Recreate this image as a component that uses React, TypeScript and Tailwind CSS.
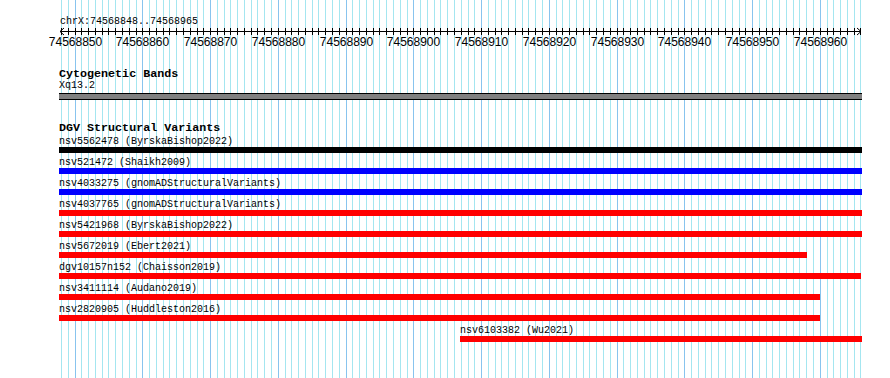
import React from 'react';

// Browser image: grid lines every base, ruler, cytoband and DGV tracks
const GRID_X0 = 61;
const BASE_PX = 6.775;
const FIRST_BASE = 74568848;
const LINE_COUNT = 119;

const gridLines = Array.from({ length: LINE_COUNT }, (_, k) => ({
  x: Math.round(GRID_X0 + k * BASE_PX) + 0.5,
  major: (FIRST_BASE + k) % 10 === 0,
  base: FIRST_BASE + k,
}));

interface Variant {
  name: string;
  study: string;
  color: string;
  left: number; // px from track start
  width: number;
}

const variants: Variant[] = [
  { name: 'nsv5562478', study: 'ByrskaBishop2022', color: '#000000', left: 0, width: 803 },
  { name: 'nsv521472', study: 'Shaikh2009', color: '#0000ff', left: 0, width: 803 },
  { name: 'nsv4033275', study: 'gnomADStructuralVariants', color: '#0000ff', left: 0, width: 803 },
  { name: 'nsv4037765', study: 'gnomADStructuralVariants', color: '#ff0000', left: 0, width: 803 },
  { name: 'nsv5421968', study: 'ByrskaBishop2022', color: '#ff0000', left: 0, width: 803 },
  { name: 'nsv5672019', study: 'Ebert2021', color: '#ff0000', left: 0, width: 748 },
  { name: 'dgv10157n152', study: 'Chaisson2019', color: '#ff0000', left: 0, width: 802 },
  { name: 'nsv3411114', study: 'Audano2019', color: '#ff0000', left: 0, width: 761 },
  { name: 'nsv2820905', study: 'Huddleston2016', color: '#ff0000', left: 0, width: 761 },
  { name: 'nsv6103382', study: 'Wu2021', color: '#ff0000', left: 401, width: 402 },
];

const Grid = () => (
  <svg className="absolute inset-0 pointer-events-none" width={890} height={378} shapeRendering="crispEdges">
    {gridLines.map((l) => (
      <line key={l.base} x1={l.x} x2={l.x} y1={0} y2={378} stroke={l.major ? '#88c4ee' : '#a4e6f0'} strokeWidth={1} />
    ))}
  </svg>
);

const Ruler = () => (
  <div className="relative h-[23px] w-[890px]">
    <svg width={890} height={10} className="block">
      <line x1={60} x2={861} y1={4.5} y2={4.5} stroke="#000" strokeWidth={1} shapeRendering="crispEdges" />
      {gridLines.map((l) => (
        <line key={l.base} x1={l.x} x2={l.x} y1={1} y2={8} stroke="#000" strokeWidth={1} shapeRendering="crispEdges" />
      ))}
      <polyline points="64,1 60,4.5 64,8" fill="none" stroke="#000" strokeWidth={1} />
      <polyline points="857,1 861,4.5 857,8" fill="none" stroke="#000" strokeWidth={1} />
    </svg>
    {/* axis labels centred on the major grid lines */}
    {gridLines
      .filter((l) => l.major)
      .map((l) => (
        <span
          key={l.base}
          className="absolute top-[9px] -translate-x-1/2 font-['Liberation_Sans'] text-[12px] leading-[12px] whitespace-nowrap"
          style={{ left: l.x }}
        >
          {l.base}
        </span>
      ))}
  </div>
);

export default function App() {
  return (
    <div className="relative w-[890px] h-[378px] bg-white overflow-hidden text-black">
      <Grid />
      <div className="relative flex flex-col font-['Liberation_Mono','DejaVu_Sans_Mono',monospace]">
        <div className="mt-[17px] ml-[60px] h-[10px] text-[10px] leading-[10px] whitespace-nowrap">
          chrX:74568848..74568965
        </div>
        <Ruler />

        {/* Cytogenetic bands */}
        <div className="ml-[59px] w-[803px] flex flex-col">
          <div className="mt-[18px] h-[12px] text-[11.7px] leading-[12px] font-bold whitespace-nowrap">
            Cytogenetic Bands
          </div>
          <div className="h-[11px] text-[10px] leading-[11px] whitespace-nowrap">Xq13.2</div>
          <div className="mt-[2px] h-[7px] bg-[#808080] border-y border-black" />
        </div>

        {/* DGV */}
        <div className="ml-[59px] w-[803px] flex flex-col">
          <div className="mt-[22px] h-[12px] text-[11.7px] leading-[12px] font-bold whitespace-nowrap">
            DGV Structural Variants
          </div>
          {variants.map((v, i) => (
            <div key={v.name} className={i === 0 ? 'flex flex-col pt-[2px]' : 'flex flex-col pt-[4px]'}>
              <div
                className="h-[11px] text-[10px] leading-[11px] whitespace-nowrap"
                style={{ marginLeft: v.left }}
              >
                {v.name} ({v.study})
              </div>
              <div className="h-[6px]" style={{ marginLeft: v.left, width: v.width, backgroundColor: v.color }} />
            </div>
          ))}
        </div>
      </div>
    </div>
  );
}
